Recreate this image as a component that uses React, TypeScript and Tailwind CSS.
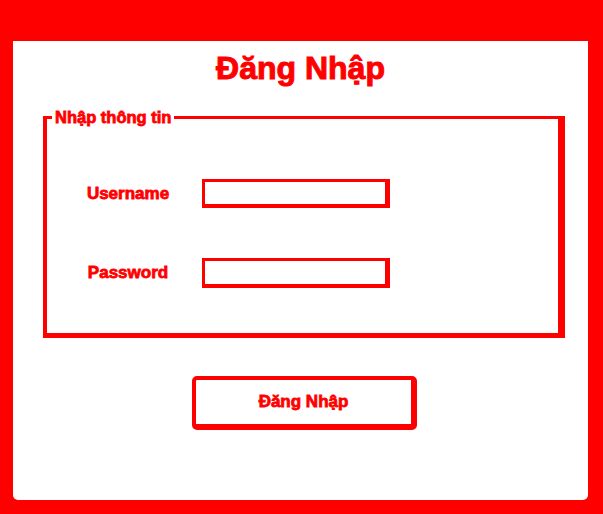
const Login = () => {
  return (
    <div className="w-[603px] h-[514px] bg-[#ff0000] pt-[41px] pl-[13px] pr-[15px] pb-[14px] font-['Liberation_Sans',Arial,sans-serif] text-[#ff0000]">
      <div className="h-full bg-white rounded-b-[5px] flex flex-col">
        <h1 className="mt-[9px] text-center text-[32px] leading-[37px] font-bold [-webkit-text-stroke:1px_#ff0000]">Đăng Nhập</h1>

        <fieldset className="mt-[21px] ml-[30px] w-[522px] p-0 border-[#ff0000] border-t-[3px] border-l-4 border-r-[7px] border-b-[5px]">
          <legend className="ml-[5px] px-[3px] text-[16.5px] leading-[18px] font-bold [-webkit-text-stroke:0.8px_#ff0000]">Nhập thông tin</legend>
          <div className="flex flex-col gap-[50px] pt-[53px] pb-[45px] pl-[8px]">
            <div className="flex items-center">
              <label htmlFor="username" className="w-[146px] text-center text-[17px] font-bold [-webkit-text-stroke:0.8px_#ff0000]">Username</label>
              <input id="username" type="text" className="ml-[1px] w-[188px] h-[29px] bg-white border-[#ff0000] border-t-[3px] border-l-[3px] border-r-[5px] border-b-4 outline-none" />
            </div>
            <div className="flex items-center">
              <label htmlFor="password" className="w-[146px] text-center text-[17px] font-bold [-webkit-text-stroke:0.8px_#ff0000]">Password</label>
              <input id="password" type="password" className="ml-[1px] w-[188px] h-[30px] bg-white border-[#ff0000] border-t-[3px] border-l-[3px] border-r-[5px] border-b-4 outline-none" />
            </div>
          </div>
        </fieldset>

        <button className="mt-[38px] ml-[179px] w-[225px] h-[54px] rounded-[5px] bg-white border-[#ff0000] border-t-4 border-l-4 border-r-[6px] border-b-[6px] text-[17px] font-bold [-webkit-text-stroke:0.8px_#ff0000]">
          Đăng Nhập
        </button>
      </div>
    </div>
  );
};

export default function App() {
  return <Login />;
}
